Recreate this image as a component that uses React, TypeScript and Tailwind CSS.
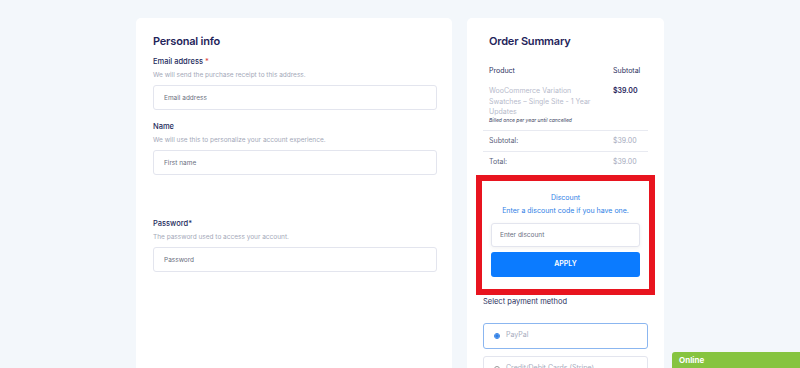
const font = { fontFamily: "Inter, 'Noto Sans', sans-serif" };

const Field = ({
  label,
  hint,
  placeholder,
}: {
  label: React.ReactNode;
  hint: string;
  placeholder: string;
}) => (
  <div className="flex flex-col">
    <label className="text-[7.5px] leading-[12px] font-medium text-[#232a5c]">{label}</label>
    <p className="mt-[1px] text-[6.5px] leading-[12px] text-[#a3a8b8]">{hint}</p>
    <input
      placeholder={placeholder}
      className="mt-[4px] h-[25px] w-full rounded-[3px] border border-[#e3e5ee] bg-white px-[10px] text-[6.5px] text-[#555] placeholder:text-[#6b6f80] outline-none"
    />
  </div>
);

export default function App() {
  return (
    <div className="h-[368px] overflow-hidden bg-[#f3f7fb]" style={font}>
      <div className="flex justify-center gap-[15px] pt-[18px]">
        {/* personal info */}
        <div className="h-[400px] w-[316px] rounded-t-[5px] bg-white pl-[17px] pr-[15px] pt-[16px]">
          <h2 className="text-[11px] leading-[14px] font-semibold tracking-[-0.2px] text-[#1f245a]">Personal info</h2>
          <div className="mt-[8px] flex flex-col">
            <Field
              label={<>Email address <span className="text-[#e04848]">*</span></>}
              hint="We will send the purchase receipt to this address."
              placeholder="Email address"
            />
            <div className="mt-[11px]">
              <Field
                label="Name"
                hint="We will use this to personalize your account experience."
                placeholder="First name"
              />
            </div>
            <div className="mt-[43px]">
              <Field label="Password*" hint="The password used to access your account." placeholder="Password" />
            </div>
          </div>
        </div>

        {/* order summary */}
        <div className="h-[400px] w-[197px] rounded-t-[5px] bg-white px-[16px] pt-[16px]">
          <h2 className="pl-[6px] text-[11px] leading-[14px] font-semibold tracking-[-0.2px] text-[#1f245a]">Order Summary</h2>
          <div className="mt-[17px] flex justify-between pl-[6px] pr-[5px] text-[7px] leading-[12px] text-[#2b3060]">
            <span>Product</span>
            <span className="w-[30px]">Subtotal</span>
          </div>
          <div className="mt-[9px] flex justify-between pl-[6px] pr-[5px] pb-[6px]">
            <div className="w-[112px]">
              <p className="text-[7px] leading-[10.5px] text-[#b7bbcb]">
                WooCommerce Variation Swatches – Single Site - 1 Year Updates
              </p>
              <p className="-mt-[2px] text-[5px] leading-[8px] italic text-[#3a3f60]">Billed once per year until cancelled</p>
            </div>
            <span className="w-[30px] text-[7px] leading-[10.5px] font-semibold text-[#1f245a]">$39.00</span>
          </div>
          <div className="flex justify-between border-t border-[#e8eaf1] pl-[6px] pr-[5px] text-[7px] leading-[20px] text-[#5a5f7c]">
            <span>Subtotal:</span>
            <span className="w-[30px] text-[#a6abbd]">$39.00</span>
          </div>
          <div className="flex justify-between border-t border-[#e8eaf1] pl-[6px] pr-[5px] text-[7px] leading-[20px] text-[#5a5f7c]">
            <span>Total:</span>
            <span className="w-[30px] text-[#a6abbd]">$39.00</span>
          </div>

          <div className="-mx-[7px] mt-[3px] border-[6px] border-[#e8141f] bg-white px-[9px] pt-[12px] pb-[12px]">
            <p className="text-center text-[7px] leading-[10px] text-[#2f7fe6]">Discount</p>
            <p className="mt-[3px] text-center text-[7px] leading-[10px] text-[#2f7fe6]">
              Enter a discount code if you have one.
            </p>
            <input
              placeholder="Enter discount"
              className="mt-[7px] h-[24px] w-full rounded-[3px] border border-[#e3e5ee] bg-white px-[8px] text-[6.5px] shadow-[0_1px_4px_rgba(0,0,0,0.06)] placeholder:text-[#6b6f80] outline-none"
            />
            <button className="mt-[5px] h-[25px] w-full rounded-[3px] bg-[#0b7bff] text-[7px] font-semibold text-white">
              APPLY
            </button>
          </div>

          <p className="mt-[2px] text-[7.5px] leading-[10px] text-[#2b3060]">Select payment method</p>
          <div className="mt-[16px] flex h-[26px] items-center gap-[6px] rounded-[3px] border border-[#8bb6f0] px-[10px]">
            <span className="flex h-[6px] w-[6px] items-center justify-center rounded-full border border-[#2f7fe6]">
              <span className="h-[4px] w-[4px] rounded-full bg-[#2f7fe6]" />
            </span>
            <span className="text-[7px] text-[#a6abbd]">PayPal</span>
          </div>
          <div className="mt-[7px] flex h-[26px] items-center gap-[6px] rounded-[3px] border border-[#e3e5ee] px-[10px]">
            <span className="h-[6px] w-[6px] rounded-full border border-[#999]" />
            <span className="text-[7px] text-[#a6abbd]">Credit/Debit Cards (Stripe)</span>
          </div>
        </div>
      </div>

      <div className="fixed bottom-0 right-0 flex h-[16px] w-[128px] items-center rounded-tl-[3px] bg-[#86c440] px-[7px]">
        <span className="text-[8px] font-bold text-white">Online</span>
      </div>
    </div>
  );
}
